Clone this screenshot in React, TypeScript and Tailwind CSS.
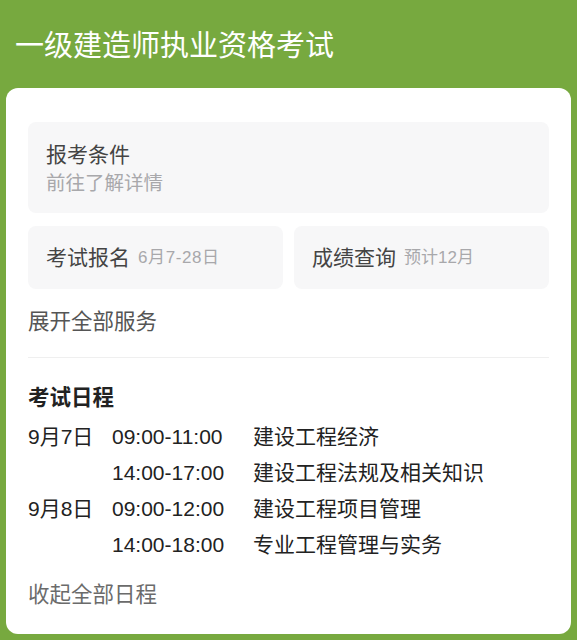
import React from 'react';

const schedule = [
  { date: '9月7日', time: '09:00-11:00', subject: '建设工程经济' },
  { date: '', time: '14:00-17:00', subject: '建设工程法规及相关知识' },
  { date: '9月8日', time: '09:00-12:00', subject: '建设工程项目管理' },
  { date: '', time: '14:00-18:00', subject: '专业工程管理与实务' },
];

export default function App() {
  return (
    <div
      className="w-[577px] h-[640px] overflow-hidden bg-[#77a93f] px-[6px]"
      style={{ fontFamily: '"Liberation Sans", "Noto Sans CJK SC", sans-serif' }}
    >
      {/* Header */}
      <div className="h-[88px] pl-[9px] pt-[25px]">
        <h1 className="text-[29px] leading-[42px] text-white font-normal">一级建造师执业资格考试</h1>
      </div>

      {/* Card */}
      <div className="bg-white rounded-[12px] h-[546px] px-[22px] pt-[34px]">
        <div className="bg-[#f7f7f8] rounded-[8px] h-[91px] px-[18px] pt-[18px]">
          <div className="text-[21px] leading-[30px] text-[#444]">报考条件</div>
          <div className="text-[19.5px] leading-[26px] text-[#a8a8ab]">前往了解详情</div>
        </div>

        <div className="mt-[13px] grid grid-cols-2 gap-[11px]">
          <div className="bg-[#f7f7f8] rounded-[8px] h-[63px] px-[18px] flex items-center">
            <span className="text-[21px] text-[#444]">考试报名</span>
            <span className="ml-[8px] text-[17px] tracking-[0.6px] text-[#a8a8ab]">6月7-28日</span>
          </div>
          <div className="bg-[#f7f7f8] rounded-[8px] h-[63px] px-[18px] flex items-center">
            <span className="text-[21px] text-[#444]">成绩查询</span>
            <span className="ml-[8px] text-[17px] text-[#a8a8ab]">预计12月</span>
          </div>
        </div>

        <div className="mt-[18px] text-[21.5px] leading-[30px] text-[#555]">展开全部服务</div>

        <div className="mt-[20px] border-t border-[#efefef]" />

        <div className="mt-[25px] text-[21.5px] leading-[30px] font-bold text-[#222]">考试日程</div>

        <div className="mt-[6px]">
          {schedule.map((row, i) => (
            <div key={i} className="flex h-[36px] items-center text-[21px] text-[#222]">
              <span className="w-[84px]">{row.date}</span>
              <span className="w-[141px]">{row.time}</span>
              <span>{row.subject}</span>
            </div>
          ))}
        </div>

        <div className="mt-[17px] text-[21.5px] leading-[30px] text-[#6b6b6b]">收起全部日程</div>
      </div>
    </div>
  );
}
